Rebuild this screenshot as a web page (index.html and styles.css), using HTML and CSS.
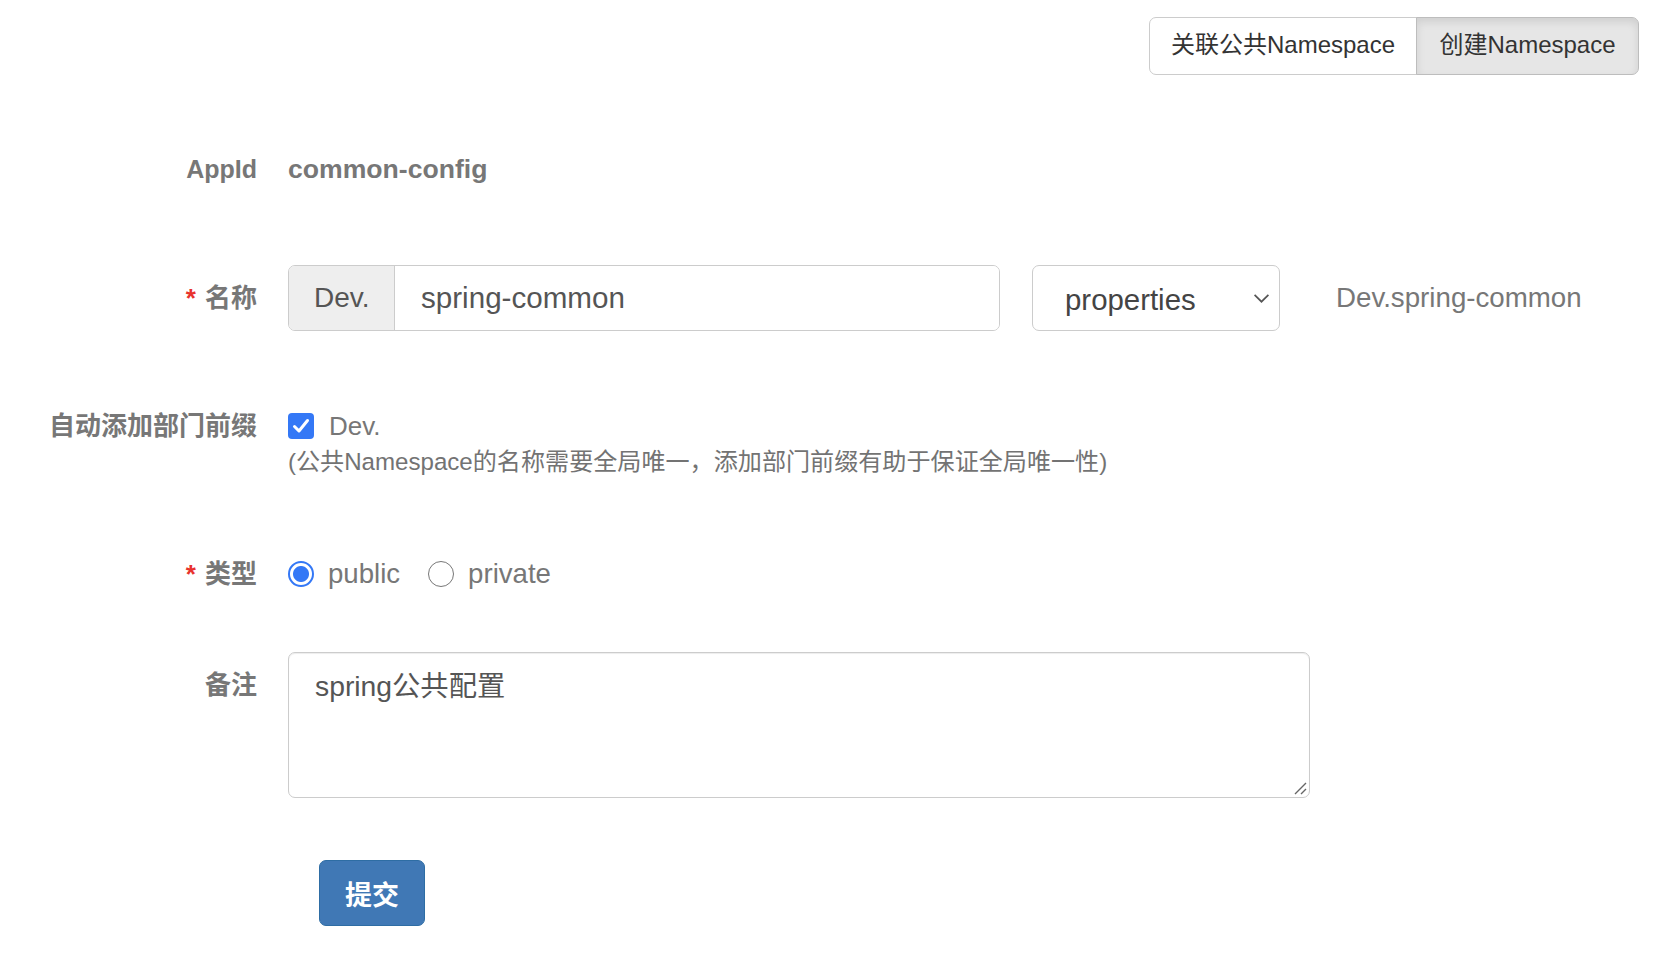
FILE: index.html
```html
<!DOCTYPE html>
<html lang="zh-CN">
<head>
<meta charset="utf-8">
<title>创建Namespace</title>
<link rel="stylesheet" href="styles.css">
</head>
<body>
<div class="toolbar">
  <div class="btn-group">
    <button class="btn btn-first" type="button">关联公共Namespace</button>
    <button class="btn btn-active" type="button">创建Namespace</button>
  </div>
</div>

<form class="form">
  <div class="row row-appid">
    <div class="label label-appid">AppId</div>
    <div class="static-bold">common-config</div>
  </div>

  <div class="row row-name">
    <div class="label"><span class="req">*</span>名称</div>
    <div class="name-line">
      <div class="input-group">
        <span class="addon">Dev.</span>
        <input class="input" type="text" value="spring-common">
      </div>
      <div class="select">
        <span>properties</span>
        <svg class="chev" width="16" height="10" viewBox="0 0 16 10"><path d="M1.5 1.5 L8 8 L14.5 1.5" fill="none" stroke="#555" stroke-width="1.6"/></svg>
      </div>
      <span class="preview">Dev.spring-common</span>
    </div>
  </div>

  <div class="row row-check">
    <div class="label">自动添加部门前缀</div>
    <div>
      <div class="check-line">
        <span class="checkbox">
          <svg width="26" height="26" viewBox="0 0 26 26"><rect x="0" y="0" width="26" height="26" rx="4" fill="#3478f6"/><path d="M6.5 13.5 L11 18 L19.5 7.5" fill="none" stroke="#fff" stroke-width="3" stroke-linecap="round" stroke-linejoin="round"/></svg>
        </span>
        <span class="opt-text">Dev.</span>
      </div>
      <div class="help">(公共Namespace的名称需要全局唯一，添加部门前缀有助于保证全局唯一性)</div>
    </div>
  </div>

  <div class="row row-type">
    <div class="label"><span class="req">*</span>类型</div>
    <div class="radio-line">
      <span class="radio radio-on"></span>
      <span class="opt-text">public</span>
      <span class="radio radio-off"></span>
      <span class="opt-text">private</span>
    </div>
  </div>

  <div class="row row-comment">
    <div class="label label-top">备注</div>
    <div class="textarea">spring公共配置
      <svg class="grip" width="14" height="14" viewBox="0 0 14 14"><path d="M2 13 L13 2 M8 13 L13 8" stroke="#666" stroke-width="1.4"/></svg>
    </div>
  </div>

  <div class="row row-submit">
    <div></div>
    <div><button class="submit" type="button">提交</button></div>
  </div>
</form>
</body>
</html>
```

FILE: styles.css
```css
html, body {
  margin: 0;
  padding: 0;
  background: #fff;
}
body {
  font-family: "Liberation Sans", "Noto Sans CJK SC", sans-serif;
  color: #333;
}

.toolbar {
  display: flex;
  justify-content: flex-end;
  padding: 17px 15px 0 0;
}
.btn-group {
  display: flex;
}
.btn {
  height: 58px;
  box-sizing: border-box;
  padding: 0 20px 2px;
  font-family: "Liberation Sans", "Noto Sans CJK SC", sans-serif;
  font-size: 24px;
  line-height: 1;
  color: #333;
  background: #fff;
  border: 1px solid #ccc;
}
.btn-first {
  width: 268px;
  border-radius: 7px 0 0 7px;
}
.btn-active {
  width: 223px;
  margin-left: -1px;
  background: #e6e6e6;
  border-color: #bdbdbd;
  border-radius: 0 7px 7px 0;
  box-shadow: inset 0 4px 8px rgba(0, 0, 0, 0.1);
}

.form {
  display: flex;
  flex-direction: column;
}
.row {
  display: grid;
  grid-template-columns: 257px 1fr;
  column-gap: 31px;
  align-items: center;
}
.label {
  text-align: right;
  font-weight: bold;
  font-size: 26px;
  color: #777;
  line-height: 40px;
  white-space: nowrap;
}
.label-appid {
  font-size: 25px;
}
.req {
  color: #e8322e;
  margin-right: 9px;
}

.row-appid {
  margin-top: 74px;
}
.static-bold {
  font-weight: bold;
  font-size: 26.6px;
  color: #777;
  line-height: 40px;
}

.row-name {
  margin-top: 76px;
}
.name-line {
  display: flex;
  align-items: center;
}
.input-group {
  display: flex;
  width: 712px;
  height: 66px;
  box-sizing: border-box;
  border: 1px solid #ccc;
  border-radius: 7px;
  overflow: hidden;
}
.addon {
  width: 106px;
  box-sizing: border-box;
  background: #eee;
  border-right: 1px solid #ccc;
  font-size: 28px;
  color: #555;
  display: flex;
  align-items: center;
  padding-left: 25px;
}
.input {
  flex: 1;
  border: 0;
  outline: none;
  padding: 0 0 0 26px;
  font-family: "Liberation Sans", "Noto Sans CJK SC", sans-serif;
  font-size: 29.6px;
  color: #555;
  background: #fff;
}
.select {
  margin-left: 32px;
  width: 248px;
  height: 66px;
  box-sizing: border-box;
  border: 1px solid #ccc;
  border-radius: 7px;
  display: flex;
  align-items: center;
  justify-content: space-between;
  padding: 4px 9px 0 32px;
  font-size: 29.4px;
  color: #444;
}
.chev {
  margin-bottom: 4px;
  width: 17px;
  height: 11px;
}
.preview {
  margin-left: 56px;
  font-size: 27.7px;
  color: #777;
}

.row-check {
  margin-top: 75px;
  align-items: start;
}
.check-line {
  display: flex;
  align-items: center;
  height: 40px;
}
.checkbox {
  display: flex;
  width: 26px;
  height: 26px;
}
.opt-text {
  font-size: 26px;
  color: #777;
  margin-left: 15px;
}
.help {
  font-size: 24.1px;
  color: #737373;
  line-height: 32px;
  margin-top: 0;
}

.row-type {
  margin-top: 76px;
}
.radio-line {
  display: flex;
  align-items: center;
  height: 40px;
}
.radio {
  width: 26px;
  height: 26px;
  box-sizing: border-box;
  border-radius: 50%;
  flex: none;
}
.radio-on {
  border: 2px solid #3478f6;
  background: radial-gradient(circle, #3478f6 0 7.5px, #fff 8.5px);
}
.radio-off {
  border: 1.6px solid #777;
  background: #fff;
  margin-left: 28px;
}
.radio-line .opt-text {
  margin-left: 14px;
  font-size: 27.6px;
}

.row-comment {
  margin-top: 58px;
  align-items: start;
}
.label-top {
  margin-top: 13px;
}
.textarea {
  position: relative;
  width: 1022px;
  height: 146px;
  box-sizing: border-box;
  border: 1px solid #ccc;
  border-radius: 7px;
  padding: 13px 26px;
  font-size: 28.3px;
  line-height: 40px;
  color: #555;
  box-shadow: inset 0 1px 1px rgba(0, 0, 0, 0.075);
}
.grip {
  position: absolute;
  right: 2px;
  bottom: 2px;
}

.row-submit {
  margin-top: 62px;
}
.submit {
  margin-left: 31px;
  width: 106px;
  height: 66px;
  box-sizing: border-box;
  background: #4078b5;
  border: 1px solid #2e6da4;
  border-radius: 7px;
  color: #fff;
  font-family: "Liberation Sans", "Noto Sans CJK SC", sans-serif;
  font-size: 27px;
  font-weight: bold;
}
```
